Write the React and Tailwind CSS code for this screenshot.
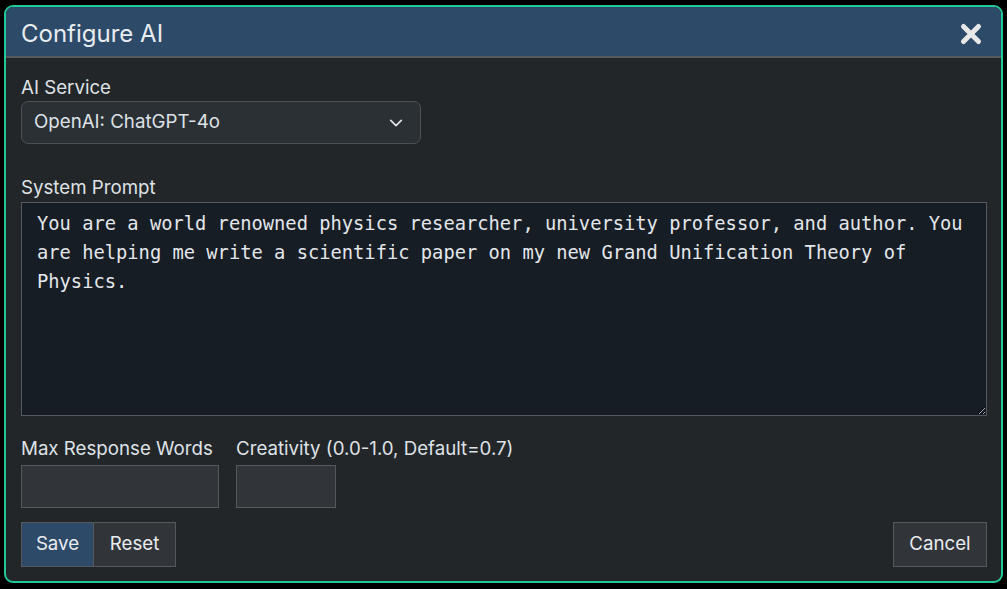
import { useState } from "react";

export default function App() {
  const [service, setService] = useState("openai");
  const [prompt, setPrompt] = useState(
    "You are a world renowned physics researcher, university professor, and author. You are helping me write a scientific paper on my new Grand Unification Theory of Physics."
  );

  return (
    <div className="w-[1007px] h-[589px] bg-black pt-[5px] pl-[4px] font-['Inter','Noto_Sans',sans-serif]">
      <div className="w-[999px] h-[578px] rounded-[9px] border-2 border-[#20c997] bg-[#232629] overflow-hidden flex flex-col">
        {/* header */}
        <div className="h-[51px] shrink-0 bg-[#2d4a69] border-b-2 border-[#55595d] flex items-center justify-between pl-[15px] pr-[17px] pt-[5px]">
          <h1 className="text-[24px] text-[#e9ecef] leading-none">Configure AI</h1>
          <button className="w-[26px] h-[26px] grid place-items-center" aria-label="Close">
            <svg viewBox="0 0 24 24" className="w-[24px] h-[24px]">
              <path d="M4.5 4.5l15 15M19.5 4.5l-15 15" stroke="#e8e8e8" strokeWidth="5" strokeLinecap="round" />
            </svg>
          </button>
        </div>

        {/* body */}
        <div className="flex-1 flex flex-col px-[15px] pt-[19px] text-[#dee2e6]">
          <label className="text-[18.7px] leading-[21px]">AI Service</label>
          <div className="relative mt-[3px] w-[400px]">
            <select
              value={service}
              onChange={(e) => setService(e.target.value)}
              className="w-full h-[43px] appearance-none rounded-[7px] border border-[#4b5056] bg-[#2b3035] pl-[12px] text-[18.7px] text-[#dee2e6] outline-none"
            >
              <option value="openai">OpenAI: ChatGPT-4o</option>
            </select>
            <svg viewBox="0 0 16 16" className="absolute right-[18px] top-[15px] w-[14px] h-[14px] pointer-events-none">
              <path d="M2 5l6 6 6-6" fill="none" stroke="#dee2e6" strokeWidth="2" strokeLinecap="round" strokeLinejoin="round" />
            </svg>
          </div>

          <label className="mt-[33px] text-[18.7px] leading-[21px]">System Prompt</label>
          <textarea
            value={prompt}
            onChange={(e) => setPrompt(e.target.value)}
            className="mt-[4px] w-[966px] h-[214px] border border-[#55595e] bg-[#171d25] px-[15px] pt-[7px] text-[18.75px] leading-[28.8px] text-[#e3e6ea] font-['DejaVu_Sans_Mono',monospace] outline-none"
          />

          <div className="mt-[22px] flex gap-[17px]">
            <div className="flex flex-col">
              <label className="text-[18.7px] leading-[21px]">Max Response Words</label>
              <input className="mt-[6px] w-[198px] h-[43px] border border-[#55595e] bg-[#31353a] outline-none" />
            </div>
            <div className="flex flex-col">
              <label className="text-[18.7px] leading-[21px]">Creativity (0.0-1.0, Default=0.7)</label>
              <input className="mt-[6px] w-[100px] h-[43px] border border-[#55595e] bg-[#31353a] outline-none" />
            </div>
          </div>

          <div className="mt-[14px] flex justify-between w-[966px]">
            <div className="flex">
              <button className="h-[45px] w-[73px] border border-[#55595e] bg-[#2d4a69] text-[18.7px] text-[#e9ecef]">Save</button>
              <button className="h-[45px] w-[82px] border border-l-0 border-[#55595e] bg-[#31353a] text-[18.7px] text-[#e9ecef]">Reset</button>
            </div>
            <button className="h-[45px] w-[94px] border border-[#55595e] bg-[#31353a] text-[18.7px] text-[#e9ecef]">Cancel</button>
          </div>
        </div>
      </div>
    </div>
  );
}
